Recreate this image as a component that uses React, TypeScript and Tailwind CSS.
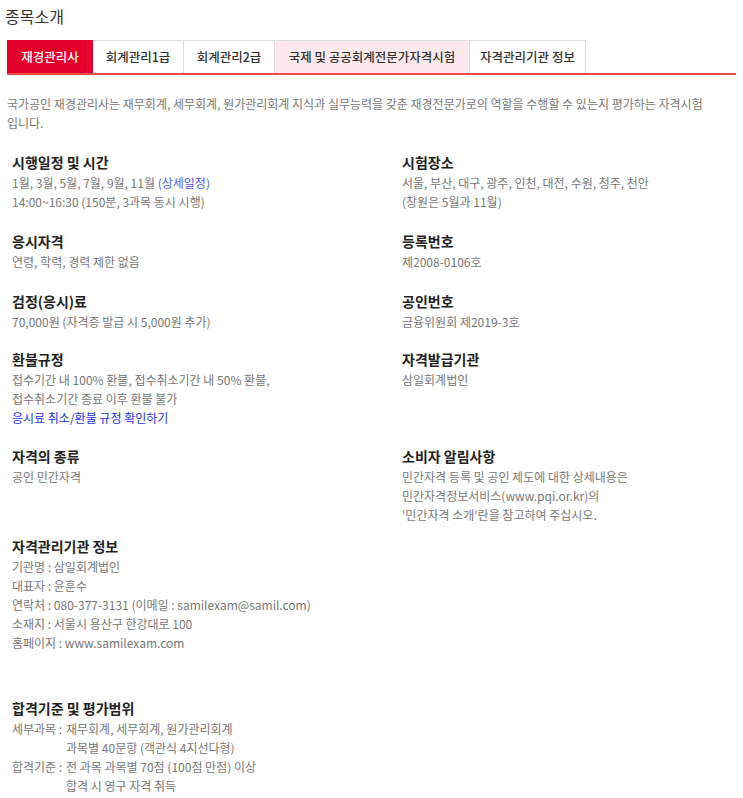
const font = {fontFamily: '"Noto Sans CJK KR", "Noto Sans", sans-serif'};

type Item = { title: string; lines: React.ReactNode[] };

const tabs = [
  { label: "재경관리사", w: "w-[86px]", cls: "bg-[#e5002b] text-white border-[#e5002b]" },
  { label: "회계관리1급", w: "w-[91px]", cls: "bg-white text-[#333] border-[#dddddd]" },
  { label: "회계관리2급", w: "w-[91px]", cls: "bg-white text-[#333] border-[#dddddd]" },
  { label: "국제 및 공공회계전문가자격시험", w: "w-[195px]", cls: "bg-[#fde9eb] text-[#333] border-[#dddddd]" },
  { label: "자격관리기관 정보", w: "w-[116px]", cls: "bg-white text-[#333] border-[#dddddd]" },
];

const Block = ({ item }: { item: Item }) => (
  <div>
    <h3 className="text-[14px] leading-[22px] font-bold text-[#222]">{item.title}</h3>
    {item.lines.map((l, i) => (
      <p key={i} className="text-[12px] leading-[19px] text-[#777] break-keep">{l}</p>
    ))}
  </div>
);

const rows: [Item, Item | null][] = [
  [
    {
      title: "시행일정 및 시간",
      lines: [
        <>1월, 3월, 5월, 7월, 9월, 11월 <span className="text-[#4b56ea]">(상세일정)</span></>,
        "14:00~16:30 (150분, 3과목 동시 시행)",
      ],
    },
    { title: "시험장소", lines: ["서울, 부산, 대구, 광주, 인천, 대전, 수원, 청주, 천안", "(창원은 5월과 11월)"] },
  ],
  [
    { title: "응시자격", lines: ["연령, 학력, 경력 제한 없음"] },
    { title: "등록번호", lines: ["제2008-0106호"] },
  ],
  [
    { title: "검정(응시)료", lines: ["70,000원 (자격증 발급 시 5,000원 추가)"] },
    { title: "공인번호", lines: ["금융위원회 제2019-3호"] },
  ],
  [
    {
      title: "환불규정",
      lines: [
        "접수기간 내 100% 환불, 접수취소기간 내 50% 환불,",
        "접수취소기간 종료 이후 환불 불가",
        <span className="text-[#2233dd]">응시료 취소/환불 규정 확인하기</span>,
      ],
    },
    { title: "자격발급기관", lines: ["삼일회계법인"] },
  ],
  [
    { title: "자격의 종류", lines: ["공인 민간자격"] },
    {
      title: "소비자 알림사항",
      lines: [
        "민간자격 등록 및 공인 제도에 대한 상세내용은",
        "민간자격정보서비스(www.pqi.or.kr)의",
        "'민간자격 소개'란을 참고하여 주십시오.",
      ],
    },
  ],
];

const rowGaps = ["mt-[19px]", "mt-[19px]", "mt-[19px]", "mt-[17px]", "mt-[18px]"];

export default function App() {
  return (
    <div className="bg-white w-[743px] min-h-[798px] px-[7px]" style={font}>
      <h2 className="text-[16px] leading-[20px] pt-[6px] -ml-[2px] text-[#333]">종목소개</h2>

      <div className="mt-[14px] flex border-b-2 border-[#f04b4b]">
        {tabs.map((t, i) => (
          <div
            key={t.label}
            className={`${t.w} ${t.cls} h-[33px] flex items-center justify-center border-t border-r ${i === 0 ? "border-l" : ""} text-[12.5px] font-medium`}
          >
            {t.label}
          </div>
        ))}
      </div>

      <p className="mt-[19px] text-[12px] leading-[19px] text-[#777] pr-[4px] break-keep">
        국가공인 재경관리사는 재무회계, 세무회계, 원가관리회계 지식과 실무능력을 갖춘 재경전문가로의 역할을 수행할 수 있는지 평가하는 자격시험 입니다.
      </p>

      <div className="pl-[5px]">
        {rows.map(([l, r], i) => (
          <div key={i} className={`grid grid-cols-[390px_1fr] ${rowGaps[i]}`}>
            <Block item={l} />
            {r ? <Block item={r} /> : <div />}
          </div>
        ))}

        <div className="mt-[11px]">
          <Block
            item={{
              title: "자격관리기관 정보",
              lines: [
                "기관명 : 삼일회계법인",
                "대표자 : 윤훈수",
                "연락처 : 080-377-3131 (이메일 : samilexam@samil.com)",
                "소재지 : 서울시 용산구 한강대로 100",
                "홈페이지 : www.samilexam.com",
              ],
            }}
          />
        </div>

        <div className="mt-[45px]">
          <h3 className="text-[14px] leading-[22px] font-bold text-[#222]">합격기준 및 평가범위</h3>
          <div className="text-[12px] leading-[19px] text-[#777]">
            <div className="flex">
              <span className="w-[54px] shrink-0">세부과목 :</span>
              <div>
                <p>재무회계, 세무회계, 원가관리회계</p>
                <p>과목별 40문항 (객관식 4지선다형)</p>
              </div>
            </div>
            <div className="flex">
              <span className="w-[54px] shrink-0">합격기준 :</span>
              <div>
                <p>전 과목 과목별 70점 (100점 만점) 이상</p>
                <p>합격 시 영구 자격 취득</p>
              </div>
            </div>
          </div>
        </div>
      </div>
    </div>
  );
}
